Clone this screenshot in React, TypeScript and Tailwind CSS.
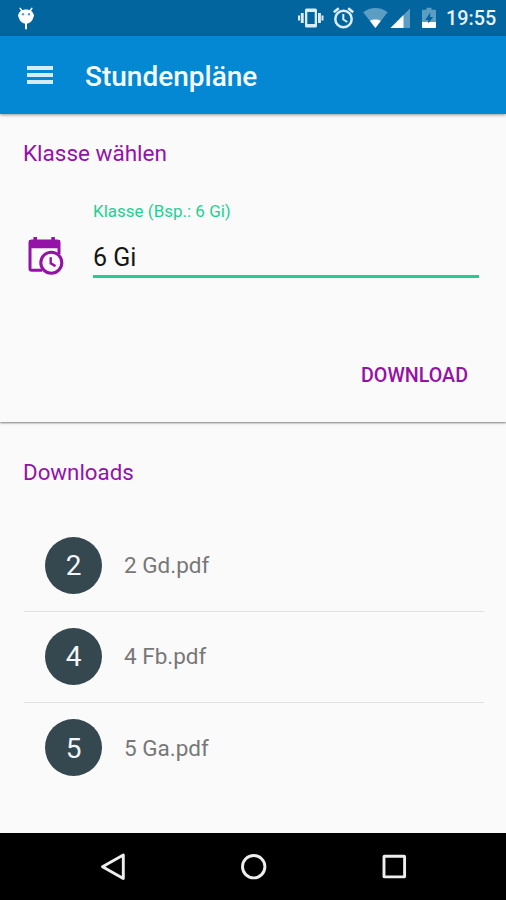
const downloads = ["2 Gd.pdf", "4 Fb.pdf", "5 Ga.pdf"]

function DebugIcon() {
  return (
    <svg width="18" height="24" viewBox="0 0 18 24" fill="#fff">
      <path d="M3.200 2.400l2 2.800M14.800 2.400l-2 2.800" stroke="#fff" strokeWidth="1.600" strokeLinecap="round" />
      <path d="M9 3.500c4.300 0 7 2.300 7.500 5 .5 5-3 9.200-7.500 9.200S1 13.500 1.500 8.500c.5-2.700 3.200-5 7.500-5z" />
      <path d="M1 8.500h16v2H1z" />
      <rect x="8" y="16" width="2" height="7.500" rx="1" />
      <circle cx="6" cy="8.200" r="1.200" fill="#5e9ac2" />
      <circle cx="12" cy="8.200" r="1.200" fill="#5e9ac2" />
    </svg>
  )
}

function StatusIcons() {
  return (
    <svg width="146" height="36" viewBox="296 0 146 36" fill="none">
      <g fill="#dcecf5">
        <path d="M298 15.500h2v5h-2zM300.800 13h2.900v10h-2.900zM321.500 15.500h2v5h-2zM318 13h2.900v10H318z" />
        <path fillRule="evenodd" d="M306.500 8.500h9a1.500 1.500 0 0 1 1.500 1.500v16a1.500 1.500 0 0 1-1.500 1.500h-9A1.500 1.500 0 0 1 305 26V10a1.500 1.500 0 0 1 1.500-1.500zm.8 3.500v12h7.400V12z" />
      </g>
      <g stroke="#dcecf5" strokeWidth="2.500">
        <circle cx="343.500" cy="19" r="8.200" />
        <path d="M333.800 12.300l5-4.100M353.200 12.300l-5-4.100" />
        <path d="M343.300 14v5.500l4 2.500" strokeWidth="2" />
      </g>
      <path d="M363.200 12.300c7-5.700 17.400-5.700 24.400 0L375.400 28z" fill="#5c9dc4" />
      <path d="M369.900 20.800c3.200-1.700 7.800-1.700 11 0L375.400 28z" fill="#fff" />
      <path d="M410 8.500V28h-19.500z" fill="#5c9dc4" />
      <path d="M403.500 15v13h-13z" fill="#fff" />
      <path d="M426.500 7.800h5v2h3.500a1 1 0 0 1 1 1v12h-14v-12a1 1 0 0 1 1-1h3.500z" fill="#5c9dc4" />
      <path d="M422 22h14v5a1 1 0 0 1-1 1h-12a1 1 0 0 1-1-1z" fill="#fff" />
      <path d="M430.200 12.500l-5 7.500h3v3.500l5-6.500h-3z" fill="#03659e" />
    </svg>
  )
}

function ScheduleIcon() {
  return (
    <svg width="38" height="40" viewBox="27 236 38 40" fill="none">
      <path d="M42 270.300h-10.300a1.700 1.700 0 0 1-1.700-1.700v-26a1.700 1.700 0 0 1 1.700-1.700h25.600a1.700 1.700 0 0 1 1.700 1.700V254" stroke="#9412a8" strokeWidth="3" />
      <path d="M29 240h31v8.300H29zM33.400 237h3.600v4h-3.600zM51.300 237h3.600v4h-3.600z" fill="#9412a8" />
      <circle cx="51.300" cy="262.700" r="10.500" fill="#fafafa" stroke="#9412a8" strokeWidth="3.100" />
      <path d="M50.700 257.300v5.900l4.800 2.900" stroke="#9412a8" strokeWidth="2.400" />
    </svg>
  )
}

function NavigationBar() {
  return (
    <nav className="h-[67px] bg-black">
      <svg width="506" height="67" viewBox="0 833 506 67" fill="none" stroke="#eee" strokeWidth="2.900" strokeLinejoin="round">
        <path d="M123.300 855v23.500L102.500 866.700z" />
        <circle cx="253.700" cy="866.700" r="11.200" />
        <rect x="384" y="856.300" width="20.600" height="20.600" rx=".5" />
      </svg>
    </nav>
  )
}

export default function App() {
  return (
    <div className="flex h-[900px] w-[506px] flex-col overflow-hidden bg-[#fafafa] font-['Roboto',sans-serif]">
      <div className="flex h-9 shrink-0 items-center justify-between bg-[#03659e] pr-[11px] pl-[17px]">
        <DebugIcon />
        <div className="flex items-center">
          <StatusIcons />
          <span className="ml-1 w-[49px] pt-[2px] text-[19.800px] leading-6 font-medium whitespace-nowrap text-[#e8f3f9]">19:55</span>
        </div>
      </div>

      <header className="z-10 flex h-[78px] shrink-0 items-center bg-[#0488d3] pl-[27px] shadow-[0_1px_3px_rgba(0,0,0,0.4)]">
        <button className="flex w-[26px] flex-col gap-[3px]" aria-label="Menu">
          <span className="h-1 bg-[#d5ebf8]" />
          <span className="h-1 bg-[#d5ebf8]" />
          <span className="h-1 bg-[#d5ebf8]" />
        </button>
        <h1 className="ml-8 pt-[3px] text-[28px] leading-8 font-medium text-[#f5fbff]">Stundenpläne</h1>
      </header>

      <section className="flex h-[308px] shrink-0 flex-col pt-6 pr-[27px] pl-[23px] shadow-[0_1px_2px_rgba(0,0,0,0.5)]">
        <h2 className="text-[22.500px] leading-[30px] text-[#9412a8]">Klasse wählen</h2>
        <div className="mt-[33px] flex">
          <div className="w-[70px] pt-[35px] pl-1">
            <ScheduleIcon />
          </div>
          <label className="flex flex-1 flex-col">
            <span className="text-[17px] leading-5 text-[#1fd093]">Klasse (Bsp.: 6 Gi)</span>
            <span className="mt-[22px] h-[35px] border-b-[3px] border-[#24cc93] text-[25px] leading-[30px] text-[#151515]">6 Gi</span>
          </label>
        </div>
        <button className="mt-[83px] mr-[11px] self-end text-[19.700px] leading-[30px] font-medium text-[#9412a8]">DOWNLOAD</button>
      </section>

      <section className="flex-1 pt-[35px] pr-[22px] pl-[23px]">
        <h2 className="text-[22.300px] leading-[30px] text-[#9412a8]">Downloads</h2>
        <ul className="mt-[34px] ml-px divide-y divide-[#e0e0e0]">
          {downloads.map((name) => (
            <li key={name} className="flex h-[91px] items-center pb-[2px] pl-[21px]">
              <span className="flex size-[57px] items-center justify-center rounded-full bg-[#35474f] pt-[2px] text-[28px] text-[#f2f6f8]">
                {name[0]}
              </span>
              <span className="ml-[22px] pt-[2px] text-[22.500px] text-[#777]">{name}</span>
            </li>
          ))}
        </ul>
      </section>

      <NavigationBar />
    </div>
  )
}
